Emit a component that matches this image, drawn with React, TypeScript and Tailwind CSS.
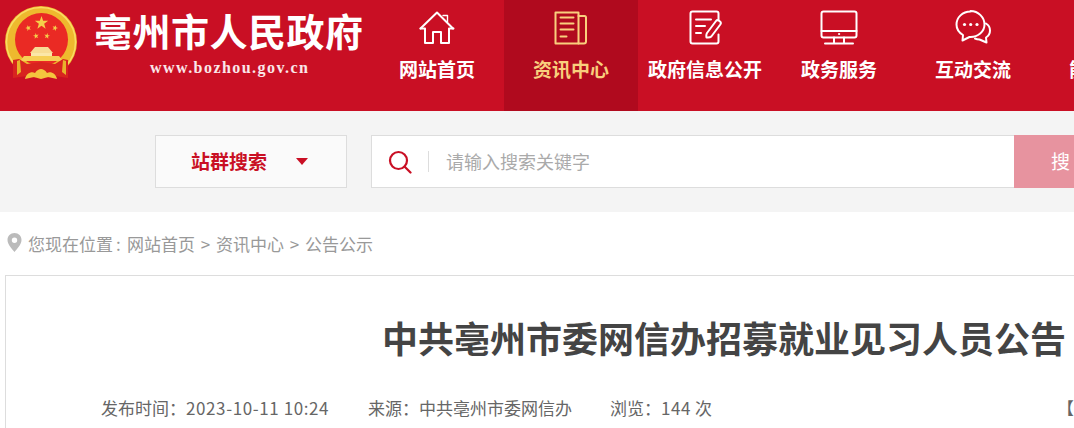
import React from "react";

const CJK = "font-['Noto_Sans_CJK_SC','Liberation_Sans',sans-serif]";

function Star({ cx, cy, r, rot = 0 }: { cx: number; cy: number; r: number; rot?: number }) {
  const pts: string[] = [];
  for (let i = 0; i < 10; i++) {
    const rad = i % 2 === 0 ? r : r * 0.4;
    const a = ((i * 36 - 90 + rot) * Math.PI) / 180;
    pts.push(`${(cx + rad * Math.cos(a)).toFixed(2)},${(cy + rad * Math.sin(a)).toFixed(2)}`);
  }
  return <polygon points={pts.join(" ")} fill="#f5cf4a" />;
}

function Emblem() {
  return (
    <svg width="74" height="76" viewBox="0 0 74 76" className="shrink-0">
      <circle cx="37" cy="36" r="36" fill="#eeb92e" />
      <circle cx="37" cy="36" r="34.500" fill="none" stroke="#f9dc63" strokeWidth="1.500" />
      <circle cx="37.500" cy="33.500" r="26.500" fill="#ea2a24" />
      <Star cx={37.500} cy={17} r={7} />
      <Star cx={24.300} cy={22} r={3} rot={-20} />
      <Star cx={32} cy={30} r={3} rot={-10} />
      <Star cx={43} cy={30} r={3} rot={10} />
      <Star cx={51} cy={22} r={3} rot={20} />
      <path d="M31 41h13l5 6H26z" fill="#f8dc94" />
      <path d="M27 47h21v3H27z" fill="#fbe7a8" />
      <path d="M20 50h35l4 5H16z" fill="#f6cf55" />
      <path d="M9 54l6-1 8 5 14-2 14 2 8-5 5 1 0 18-13-2-14 3-14-3-14 2z" fill="#d8241f" />
      <path d="M21 73c1-5 6-8 10-6 2-3 4-4 6-4s4 1 6 4c4-2 9 1 10 6l-9-2-7 2-7-2z" fill="#f4c53e" />
      <path d="M13 55l3-1 1 12-4 3zM62 55l-3-1-1 12 4 3z" fill="#e8b32c" />
    </svg>
  );
}

const ic = { fill: "none", strokeWidth: 2, strokeLinecap: "round", strokeLinejoin: "round" } as const;

function House() {
  return (
    <svg width="36" height="34" viewBox="0 0 36 34" stroke="#fff" {...ic}>
      <path d="M1.500 17.500 18 1.500l16 16" />
      <path d="M24 4.500h4.500v6.500" strokeWidth="1.400" />
      <path d="M1.500 17.500h4.500V32h8V21h8v11h8V17.500h4.500" />
    </svg>
  );
}
function Paper() {
  return (
    <svg width="36" height="34" viewBox="0 0 36 34" stroke="#f9cf7d" {...ic}>
      <path d="M2.500 1.500h23v31h-23z" />
      <path d="M25.500 5h6c1 0 1.500 .6 1.500 1.500v24c0 1.400-1 2-2 2h-5.500" />
      <path d="M7.500 6.500h13M7.500 12.500h13M7.500 18.500h13M7.500 25.500h6" />
    </svg>
  );
}
function Doc() {
  return (
    <svg width="34" height="35" viewBox="0 0 34 35" stroke="#fff" {...ic}>
      <path d="M30.500 14v-10.500c0-1.200-.8-2-2-2h-24c-1.200 0-2 .8-2 2v28c0 1.200 .8 2 2 2h24c1.200 0 2-.8 2-2v-7" />
      <path d="M8 9.500h15M8 16h9M8 23h5" />
      <path d="M18.500 27.500c-.4-2-.1-3.500 .5-4.500l9-12c.8-1 2-1 3-.3l1 .8c1 .8 1 2 .3 3l-9 12c-1 1-2.500 1.300-4.800 1z" fill="#c90f24" />
    </svg>
  );
}
function Monitor() {
  return (
    <svg width="38" height="35" viewBox="0 0 38 35" stroke="#fff" {...ic}>
      <rect x="1.500" y="1.500" width="35" height="26" rx="2" />
      <path d="M1.500 21h35" />
      <path d="M14 27.500v5M24 27.500v5M5 33.500h28" />
      <circle cx="19" cy="24" r=".6" fill="#fff" strokeWidth="1" />
    </svg>
  );
}
function Chat() {
  return (
    <svg width="36" height="35" viewBox="0 0 36 35" stroke="#fff" {...ic}>
      <path d="M15.500 1.500C7.500 1.500 1.500 7.500 1.500 14.500c0 4.500 2.300 8 6.500 10.500l-.5 5.500 7-3.500c8.500 .5 15-5.500 15-12.500s-6-13.500-14-13.500z" />
      <path d="M31 13.500c2.500 1.500 4 4 4 7 0 3-1.500 5.500-4 7l.5 5-7-3c-1.500 0-3-.2-4.500-1" />
      <circle cx="9.500" cy="14.500" r="1.600" fill="#fff" stroke="none" />
      <circle cx="15.700" cy="14.500" r="1.600" fill="#fff" stroke="none" />
      <circle cx="22" cy="14.500" r="1.600" fill="#fff" stroke="none" />
    </svg>
  );
}

const nav: { label: string; icon: React.ReactNode; active?: boolean }[] = [
  { label: "网站首页", icon: <House /> },
  { label: "资讯中心", icon: <Paper />, active: true },
  { label: "政府信息公开", icon: <Doc /> },
  { label: "政务服务", icon: <Monitor /> },
  { label: "互动交流", icon: <Chat /> },
  { label: "能力建设", icon: null },
];

export default function App() {
  return (
    <div className={`w-[1074px] h-[428px] overflow-hidden bg-white ${CJK}`}>
      <header className="w-[1300px] h-[111px] bg-[#c90f24] flex">
        <div className="w-[370px] shrink-0 flex pl-[4px] pt-[6px]">
          <Emblem />
          <div className="ml-[16px] flex flex-col items-start">
            <div className="mt-[5px] text-white text-[38px] leading-[44px] font-bold tracking-[0.5px] whitespace-nowrap font-['Liberation_Serif','Noto_Sans_CJK_SC',serif]">
              亳州市人民政府
            </div>
            <div className="ml-[56px] mt-[5px] text-white/90 text-[16px] leading-[16px] font-bold tracking-[1.45px] font-['Liberation_Serif',serif]">
              www.bozhou.gov.cn
            </div>
          </div>
        </div>
        <nav className="flex">
          {nav.map((n) => (
            <div
              key={n.label}
              className={`w-[134px] flex flex-col items-center pt-[10px] ${n.active ? "bg-[#b00a1e] text-[#f9cf7d]" : "text-white"}`}
            >
              <div className="h-[35px] flex items-center justify-center">{n.icon}</div>
              <div className="mt-[10px] text-[19px] leading-[28px] font-bold whitespace-nowrap">{n.label}</div>
            </div>
          ))}
        </nav>
      </header>

      <section className="h-[101px] bg-[#f4f4f4] flex items-start pl-[155px] pt-[24px]">
        <div className="w-[192px] h-[53px] shrink-0 bg-[#fafafa] border border-[#ddd] flex items-center pl-[35px]">
          <span className="text-[19px] font-bold text-[#c90f24] whitespace-nowrap">站群搜索</span>
          <span className="ml-[29px] w-0 h-0 border-x-[6px] border-x-transparent border-t-[7px] border-t-[#c90f24]" />
        </div>
        <div className="ml-[24px] w-[643px] h-[53px] shrink-0 bg-white border border-[#ddd] border-r-0 flex items-center pl-[16px]">
          <svg width="24" height="24" viewBox="0 0 24 24" fill="none" stroke="#c90f24" strokeWidth="2.200">
            <circle cx="10.500" cy="10.500" r="8.500" />
            <path d="m16.500 16.500 6 6" strokeLinecap="round" />
          </svg>
          <span className="ml-[16px] w-px h-[21px] bg-[#ddd]" />
          <span className="ml-[17px] text-[18px] text-[#aaa] whitespace-nowrap">请输入搜索关键字</span>
        </div>
        <div className="w-[200px] h-[53px] shrink-0 bg-[#e7939f] text-white text-[19px] flex items-center pl-[37px]">
          搜
        </div>
      </section>

      <div className="h-[63px] flex items-start pl-[7px] pt-[20px] text-[17px] leading-[24px] text-[#999] whitespace-nowrap">
        <svg width="15" height="19" viewBox="0 0 15 19" className="mt-[1px]">
          <path
            fillRule="evenodd"
            d="M7.500 0C3.400 0 .5 3 .5 7c0 4.500 4.500 9 7 12 2.500-3 7-7.500 7-12 0-4-2.900-7-7-7zm0 4.500a2.700 2.700 0 1 1 0 5.400 2.700 2.700 0 0 1 0-5.400z"
            fill="#bbb"
          />
        </svg>
        <span className="ml-[6px]">您现在位置</span>
        <span className="ml-[3px] w-[11px]">:</span>
        <span>网站首页</span>
        <span className="mx-[5px] w-[11px] text-center">&gt;</span>
        <span>资讯中心</span>
        <span className="mx-[5px] w-[11px] text-center">&gt;</span>
        <span>公告公示</span>
      </div>

      <main className="ml-[5px] w-[1300px] h-[200px] border border-[#ddd] border-b-0">
        <h1 className="pl-[376px] pt-[36px] text-[36px] leading-[50px] font-bold text-[#444] whitespace-nowrap">
          中共亳州市委网信办招募就业见习人员公告
        </h1>
        <div className="mt-[34px] pl-[95px] flex text-[17px] leading-[24px] text-[#666] whitespace-nowrap">
          <span className="w-[267px]">
            发布时间：<span className="tracking-[0.6px]">2023-10-11 10:24</span>
          </span>
          <span className="w-[242px]">来源：中共亳州市委网信办</span>
          <span className="w-[447px]">
            浏览：<span className="tracking-[0.6px]">144</span> 次
          </span>
          <span>【</span>
        </div>
      </main>
    </div>
  );
}
